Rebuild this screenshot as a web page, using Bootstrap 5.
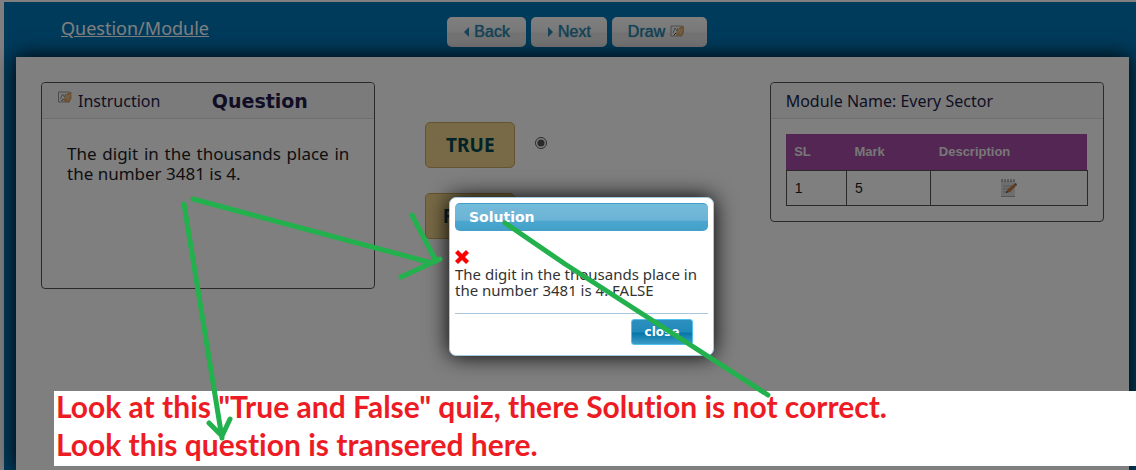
<!DOCTYPE html>
<html lang="en">
<head>
<meta charset="utf-8">
<meta name="viewport" content="width=device-width, initial-scale=1">
<title>Question/Module</title>
<link href="https://cdn.jsdelivr.net/npm/bootstrap@5.3.0/dist/css/bootstrap.min.css" rel="stylesheet">
<script src="https://cdn.jsdelivr.net/npm/bootstrap@5.3.0/dist/js/bootstrap.bundle.min.js" defer></script>
<style>
  body { font-family: "Noto Sans", sans-serif; font-size: 16px; line-height: 20px; color: #1c1c22; background: #fff; }
  .quiz-app { min-height: 100vh; padding: 2px 0 0 4px; overflow: hidden; }
  .quiz-frame { background: #0076b8; padding: 0 7px 0 12px; }
  .quiz-header { display: grid; grid-template-columns: 1fr auto 1fr; height: 55px; padding: 15px 36px 0 45px; }
  .quiz-title { font-size: 18px; line-height: 22px; color: #fff; }
  .nav-group { gap: 5px; }
  .nav-btn { height: 30px; padding: 0 16px; border: 0; border-radius: 5px; color: #2c86ae; font: 16px/30px "Liberation Sans", sans-serif; text-shadow: 0 0 1px #2c86ae; background: linear-gradient(#fff 0, #f2f2f2 50%, #e4e4e4 54%, #fafafa 100%); }
  .nav-btn-wide { padding-right: 23px; }
  .quiz-panel { background: #fff; box-shadow: 0 0 20px #000; padding: 25px 25px 0; }
  .quiz-panel .row { --bs-gutter-x: 30px; }
  .quiz-card { border: 1px solid #555; border-radius: 4px; }
  .quiz-card-head { height: 36px; padding: 0 15px; background: #f7f7f7; border-bottom: 1px solid #ddd; border-radius: 4px 4px 0 0; color: #1e1e48; }
  .instruction-icon { margin-right: 6px; }
  .question-card { min-height: 207px; }
  .question-title { font: bold 19px/24px "DejaVu Sans", sans-serif; color: #221a4a; margin: 0 auto; }
  .question-text { padding: 25px; text-align: justify; font-size: 17px; }
  .option-list { padding: 40px 0 0 20px; gap: 25px; }
  .option-row { gap: 20px; }
  .option-label { width: 90px; height: 46px; border: 1px solid #c9a862; border-radius: 5px; background: #f0d48c; color: #004650; font-weight: bold; font-size: 19px; }
  .option-radio { width: 12px; height: 12px; accent-color: #555; }
  .table-wrap { padding: 15px; }
  .mark-table { width: 100%; table-layout: fixed; font: 14px/20px "Liberation Sans", sans-serif; }
  .mark-table th { height: 36px; padding: 0 8px; background: #a64ca6; color: #eee; font-size: 13px; font-weight: bold; }
  .mark-table td { height: 35px; padding: 0 8px; border: 1px solid #555; }
  .dim-layer { position: absolute; inset: 0; background: rgba(0, 0, 0, .5); }
  .dialog-layer { position: absolute; inset: 0; padding: 197px 0 0 27px; }
  .solution-box { width: 265px; padding: 5px; background: #fff; border: 1px solid #a6c9e2; border-radius: 7px; box-shadow: 0 0 22px #000; color: #333; }
  .solution-title { height: 28px; padding: 0 14px; border-radius: 5px; border-top: 1px solid #3f9bc8; background: linear-gradient(#75bbda 0, #6bb3d5 60%, #4ba7cf 64%, #429fc8 100%); color: #fff; font: bold 14px/26px "DejaVu Sans", sans-serif; margin: 0; }
  .solution-body { padding: 19px 0 15px; border-bottom: 1px solid #a9c6dc; font-size: 15px; line-height: 16px; }
  .wrong-icon { margin-bottom: 2px; }
  .dialog-foot { padding: 5px 15px 5px 0; }
  .close-btn { height: 26px; width: 62px; padding: 0; border: 1px solid #52c1ea; border-radius: 3px; background: linear-gradient(#2d90bf 0, #2089b9 50%, #0675a8 54%, #3b9bc6 100%); color: #fff; font: bold 12px/22px "DejaVu Sans", sans-serif; }
  .note-layer { position: absolute; top: 391px; left: 54px; right: 0; padding: 0 2px; height: 75px; gap: 8px; background: #fff; color: #ed1c24; font: bold 30px/30px Lato, sans-serif; font-variant-ligatures: none; }
  .arrow-layer { position: absolute; top: 0; left: 0; pointer-events: none; }
</style>
</head>
<body class="position-relative">
<svg width="0" height="0" class="position-absolute" aria-hidden="true">
  <symbol id="draw-icon" viewBox="0 0 14 12">
    <path d="M1 1h11v10H1z" fill="#f2f2ee" stroke="#999" />
    <path d="M3 8l2-5 2 3 1-3" fill="none" stroke="#8b9aa5" />
    <path d="M7 11l-1-3 3-5 3-2h2v7l-3 3z" fill="#d9a565" />
    <path d="M8 8l2-4M10 9l2-5" stroke="#f4d8ae" />
    <path d="M6 8l-2 2" stroke="#634022" />
  </symbol>
</svg>

<div class="quiz-app d-flex">
  <div class="quiz-frame flex-fill d-flex flex-column">
    <header class="quiz-header">
      <a class="quiz-title" href="#">Question/Module</a>
      <nav class="nav-group d-flex" aria-label="Question navigation">
        <button class="nav-btn" type="button"><svg width="7" height="10" viewBox="0 0 7 10" class="me-1 align-baseline"><path d="M6 0v10L1 5z" fill="#2c86ae"/></svg>Back</button>
        <button class="nav-btn" type="button"><svg width="7" height="10" viewBox="0 0 7 10" class="me-1 align-baseline"><path d="M1 0v10l5-5z" fill="#2c86ae"/></svg>Next</button>
        <button class="nav-btn nav-btn-wide" type="button">Draw <svg width="14" height="12" class="align-baseline"><use href="#draw-icon"/></svg></button>
      </nav>
    </header>
    <main class="quiz-panel flex-fill">
      <div class="row">
        <section class="col-4">
          <div class="quiz-card question-card">
            <div class="quiz-card-head d-flex align-items-center">
              <svg width="15" height="12" class="instruction-icon mb-2"><use href="#draw-icon"/></svg>
              <span>Instruction</span>
              <h1 class="question-title">Question</h1>
            </div>
            <p class="question-text mb-0">The digit in the thousands place in the number 3481 is 4.</p>
          </div>
        </section>
        <section class="col-4">
          <div class="option-list d-flex flex-column">
            <div class="option-row d-flex align-items-center">
              <label class="option-label d-flex align-items-center justify-content-center" for="opt-true">TRUE</label>
              <input class="option-radio mb-1" type="radio" name="answer" id="opt-true" checked>
            </div>
            <div class="option-row d-flex align-items-center">
              <label class="option-label d-flex align-items-center justify-content-center" for="opt-false">FALSE</label>
              <input class="option-radio mb-1" type="radio" name="answer" id="opt-false">
            </div>
          </div>
        </section>
        <section class="col-4">
          <div class="quiz-card">
            <div class="quiz-card-head d-flex align-items-center">Module Name: Every Sector</div>
            <div class="table-wrap">
              <table class="mark-table">
                <colgroup><col style="width:20%"><col style="width:28%"><col></colgroup>
                <thead><tr><th>SL</th><th>Mark</th><th>Description</th></tr></thead>
                <tbody><tr><td>1</td><td>5</td><td>
                  <svg class="d-block mx-auto" width="18" height="20" viewBox="0 0 18 20" role="img" aria-label="Notes">
                    <path d="M1 3h14v16H1z" fill="#ddd"/><path d="M1 18h14v1H1z" fill="#aaa"/>
                    <path d="M2 1v3M5 1v3M8 1v3M11 1v3M14 1v3" stroke="#777"/>
                    <path d="M3 8h10M3 11h7M3 14h4" stroke="#9fb2bc"/>
                    <path d="M6 15l2-4 6-5 2 2-6 6z" fill="#c77a3d"/><path d="M14 6l2-1 1 2-1 1z" fill="#666"/><path d="M6 15l1-2 1 1z" fill="#222"/>
                  </svg></td></tr></tbody>
              </table>
            </div>
          </div>
        </section>
      </div>
    </main>
  </div>
</div>

<div class="dim-layer"></div>

<div class="dialog-layer d-flex justify-content-center align-items-start">
  <div class="solution-box" role="dialog" aria-labelledby="solution-title">
    <h2 class="solution-title" id="solution-title">Solution</h2>
    <div class="solution-body">
      <svg width="14" height="14" viewBox="0 0 14 14" class="wrong-icon d-block" role="img" aria-label="Wrong"><path d="M3 0l4 4 4-4 3 3-4 4 4 4-3 3-4-4-4 4-3-3 4-4-4-4z" fill="#f00"/></svg>
      The digit in the thousands place in the number 3481 is 4. FALSE
    </div>
    <div class="dialog-foot d-flex justify-content-end">
      <button class="close-btn" type="button">close</button>
    </div>
  </div>
</div>

<div class="note-layer d-flex flex-column">
  <p class="mb-0">Look at this "True and False" quiz, there Solution is not correct.</p>
  <p class="mb-0">Look this question is transered here.</p>
</div>

<svg class="arrow-layer" width="1136" height="470" viewBox="0 0 1136 470" fill="none" stroke="#22b14c" stroke-width="5" stroke-linecap="round" stroke-linejoin="round" aria-hidden="true">
  <path d="M193 199L432 263M412 215L436 261M401 277L440 259"/>
  <path d="M184 204L222 438M209 423L222 436L230 419"/>
  <path d="M505 223L565 264L768 395"/>
</svg>
</body>
</html>
